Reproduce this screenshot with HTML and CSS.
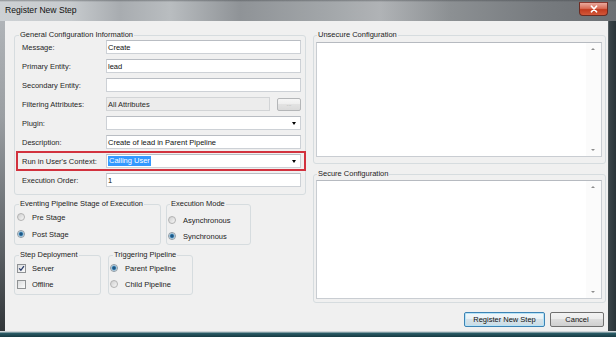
FILE: index.html
```html
<!DOCTYPE html>
<html>
<head>
<meta charset="utf-8">
<title>Register New Step</title>
<link rel="stylesheet" href="styles.css">
</head>
<body>
<div class="window">
  <div class="titlebar">
    <span class="title">Register New Step</span>
    <div class="close">
      <svg width="10" height="8" viewBox="0 0 10 8"><path d="M2.5 1.2 L7.5 6.8 M7.5 1.2 L2.5 6.8" stroke="#fff" stroke-width="1.7" stroke-linecap="round"/></svg>
    </div>
  </div>
  <div class="client">
    <div class="main">
      <div class="left">
        <fieldset class="grp general">
          <legend class="lg lg-general">General Configuration Information</legend>
          <div class="rows">
            <div class="frow"><span class="lbl">Message:</span><div class="tb">Create</div></div>
            <div class="frow"><span class="lbl">Primary Entity:</span><div class="tb">lead</div></div>
            <div class="frow"><span class="lbl">Secondary Entity:</span><div class="tb"></div></div>
            <div class="frow"><span class="lbl">Filtering Attributes:</span>
              <div class="split"><div class="tb dis">All Attributes</div><div class="dots">...</div></div>
            </div>
            <div class="frow"><span class="lbl">Plugin:</span><div class="tb combo"><span></span><i class="arr"></i></div></div>
            <div class="frow"><span class="lbl">Description:</span><div class="tb">Create of lead in Parent Pipeline</div></div>
            <div class="frow hl"><span class="lbl">Run in User's Context:</span><div class="tb combo"><span class="sel">Calling User</span><i class="arr"></i></div></div>
            <div class="frow"><span class="lbl">Execution Order:</span><div class="tb">1</div></div>
          </div>
        </fieldset>

        <div class="pair pair-a">
          <fieldset class="grp stage">
            <legend class="lg">Eventing Pipeline Stage of Execution</legend>
            <div class="opts">
              <div class="opt"><span class="radio"></span><span>Pre Stage</span></div>
              <div class="opt"><span class="radio on"></span><span>Post Stage</span></div>
            </div>
          </fieldset>
          <fieldset class="grp mode">
            <legend class="lg">Execution Mode</legend>
            <div class="opts">
              <div class="opt"><span class="radio"></span><span>Asynchronous</span></div>
              <div class="opt"><span class="radio on"></span><span>Synchronous</span></div>
            </div>
          </fieldset>
        </div>

        <div class="pair pair-b">
          <fieldset class="grp deploy">
            <legend class="lg">Step Deployment</legend>
            <div class="opts">
              <div class="opt"><span class="check"><svg width="7" height="7" viewBox="0 0 7 7"><path d="M1.2 3.4 L2.9 5.3 L5.9 1.2" fill="none" stroke="#2b3d6b" stroke-width="1.3"/></svg></span><span>Server</span></div>
              <div class="opt"><span class="check"></span><span>Offline</span></div>
            </div>
          </fieldset>
          <fieldset class="grp trig">
            <legend class="lg lg-trig">Triggering Pipeline</legend>
            <div class="opts">
              <div class="opt"><span class="radio on"></span><span>Parent Pipeline</span></div>
              <div class="opt"><span class="radio"></span><span>Child Pipeline</span></div>
            </div>
          </fieldset>
        </div>
      </div>

      <div class="right">
        <fieldset class="grp unsecure">
          <legend class="lg lg-right">Unsecure Configuration</legend>
          <div class="ta ta-top"><div class="sb"><i class="up"></i><i class="down"></i></div></div>
        </fieldset>
        <fieldset class="grp secure">
          <legend class="lg lg-right">Secure Configuration</legend>
          <div class="ta ta-bottom"><div class="sb"><i class="up"></i><i class="down"></i></div></div>
        </fieldset>
      </div>
    </div>

    <div class="buttons">
      <div class="btn primary">Register New Step</div>
      <div class="btn cancel">Cancel</div>
    </div>
  </div>
</div>
</body>
</html>
```

FILE: styles.css
```css
html, body {
  margin: 0;
  padding: 0;
}

body {
  width: 616px;
  height: 337px;
  overflow: hidden;
  font-family: "Liberation Sans", Arial, sans-serif;
  font-size: 7.5px;
  color: #1c1c1c;
  background: #2c3438;
}

.window {
  width: 616px;
  height: 337px;
  display: flex;
  flex-direction: column;
  background:
    linear-gradient(180deg, transparent 0, transparent 331px, #cfd5d8 331px, #cfd5d8 332px, #2b5e69 333px, #173a42 337px),
    linear-gradient(90deg, transparent 0, transparent 607px, #3a4448 609px, #2a3438 616px),
    linear-gradient(180deg, #b4b8bc 0, #9a9ea2 35%, #5a5f63 75%, #2e3336 100%);
}

/* ---------- title bar ---------- */
.titlebar {
  flex: none;
  height: 21px;
  display: flex;
  align-items: flex-start;
  padding-left: 5px;
  box-sizing: border-box;
  background:
    linear-gradient(180deg, rgba(60, 64, 68, 0.45) 0, rgba(60, 64, 68, 0) 2px),
    linear-gradient(90deg, #cdd1d4 0, #c7cbce 70px, #a8acb0 120px, #b9bdc0 170px, #8f9397 240px, #a3a7aa 330px, #b0b3b6 380px, #8c9093 450px, #777b7f 540px, #6c7074 616px);
}

.title {
  font-size: 8.6px;
  line-height: 21px;
  color: #101010;
}

.close {
  margin-left: auto;
  margin-right: 8px;
  margin-top: 2px;
  width: 29px;
  height: 14px;
  box-sizing: border-box;
  border: 1px solid #6b2b22;
  border-top-color: #8a3a30;
  border-radius: 0 0 4px 4px;
  background: linear-gradient(180deg, #e9a99d 0, #d86c56 45%, #c23b1f 55%, #d2583a 100%);
  display: flex;
  align-items: center;
  justify-content: center;
}

.close svg {
  display: block;
}

/* ---------- client area ---------- */
.client {
  flex: 1;
  margin: 0 8px 6px 5px;
  padding-top: 9px;
  background: #f0f0f0;
  display: flex;
  flex-direction: column;
  box-sizing: border-box;
}

.main {
  display: grid;
  grid-template-columns: 292px 293px;
  column-gap: 7px;
  padding-left: 9px;
  align-items: start;
}

.left {
  display: flex;
  flex-direction: column;
}

.right {
  display: flex;
  flex-direction: column;
}

/* ---------- group boxes ---------- */
.grp {
  margin: 0;
  min-width: 0;
  box-sizing: border-box;
  border: 1px solid #d6dcdf;
  border-radius: 3px;
  padding: 0;
}

.lg {
  padding: 0 1px;
  margin-left: 2px;
  line-height: 10px;
  font-size: 7.5px;
  color: #1c1c1c;
}

.lg-general {
  margin-left: 0;
}

.lg-trig {
  margin-left: 3px;
}

.lg-right {
  margin-left: 1px;
}

.general {
  padding: 0 2px 7px 4px;
  margin-bottom: 4px;
}

.rows {
  display: flex;
  flex-direction: column;
  gap: 5px;
}

.frow {
  display: grid;
  grid-template-columns: 84px 1fr;
  align-items: center;
  height: 14px;
  padding: 0 2px 0 3px;
}

.frow.hl {
  outline: 2px solid #d2323e;
  outline-offset: 1px;
}

.lbl {
  color: #262626;
  white-space: nowrap;
}

.tb {
  height: 14px;
  box-sizing: border-box;
  border: 1px solid #cdd1d6;
  border-top-color: #b9bdc3;
  background: #fff;
  padding: 0 1px;
  display: flex;
  align-items: center;
  color: #111;
  white-space: nowrap;
  overflow: hidden;
}

.tb.dis {
  flex: 1;
  background: #ececec;
  border-color: #d2d4d6;
  color: #2a2a2a;
}

.split {
  display: flex;
  gap: 7px;
  align-items: center;
}

.dots {
  width: 24px;
  height: 13px;
  box-sizing: border-box;
  border: 1px solid #b4b6b8;
  border-radius: 2px;
  background: linear-gradient(180deg, #f6f6f6 0, #ededed 50%, #e2e2e2 50%, #dadada 100%);
  color: #a8a8a8;
  font-size: 6px;
  line-height: 11px;
  text-align: center;
}

.combo .arr {
  margin-left: auto;
  margin-right: 3px;
  width: 0;
  height: 0;
  border-left: 2.5px solid transparent;
  border-right: 2.5px solid transparent;
  border-top: 3px solid #000;
}

.sel {
  background: #3399ff;
  color: #fff;
  padding: 0 1px;
  line-height: 10px;
}

/* ---------- option groups ---------- */
.pair {
  display: flex;
}

.pair-a {
  gap: 5px;
  margin-bottom: 5px;
}

.pair-b {
  gap: 7px;
}

.opts {
  display: flex;
  flex-direction: column;
}

.opt {
  display: flex;
  align-items: center;
  height: 14px;
  gap: 7px;
  white-space: nowrap;
}

.stage {
  width: 147px;
  padding: 1px 2px 3px 2px;
}

.stage .opts {
  gap: 3px;
}

.mode {
  width: 85px;
  padding: 4px 2px 0 1px;
}

.mode .opts {
  gap: 2px;
}

.deploy {
  width: 87px;
  padding: 1px 2px 3px 2px;
}

.deploy .opts,
.trig .opts {
  gap: 2px;
}

.deploy .opt {
  gap: 6px;
}

.trig {
  width: 85px;
  padding: 1px 2px 3px 1px;
}

.radio {
  flex: none;
  width: 8px;
  height: 8px;
  box-sizing: border-box;
  border-radius: 50%;
  border: 1px solid #b2b2b2;
  background: linear-gradient(135deg, #cfcfcf 0, #f7f7f7 100%);
}

.radio.on {
  border-color: #8d99a3;
  background: radial-gradient(circle at 50% 50%, #163f66 0, #2a6e9f 1.5px, #8fbfe0 2.4px, #e4e8ea 3px);
}

.check {
  flex: none;
  width: 9px;
  height: 9px;
  box-sizing: border-box;
  border: 1px solid #8f9294;
  background: linear-gradient(135deg, #dadcdd 0, #fbfbfb 100%);
  display: flex;
  align-items: center;
  justify-content: center;
}

.check svg {
  display: block;
}

/* ---------- text areas ---------- */
.unsecure {
  padding: 2px 3px 6px 2px;
}

.secure {
  margin-top: 5px;
  padding: 1px 3px 3px 2px;
}

.ta {
  box-sizing: border-box;
  border: 1px solid #c9cdd2;
  border-top-color: #b6bac0;
  background: #fff;
  display: flex;
  justify-content: flex-end;
}

.ta-top {
  height: 115px;
}

.ta-bottom {
  height: 119px;
}

.sb {
  width: 15px;
  background: #fbfbfb;
  display: flex;
  flex-direction: column;
  justify-content: space-between;
  align-items: center;
  padding: 5px 2px 5px 0;
  box-sizing: border-box;
}

.sb .up {
  width: 0;
  height: 0;
  border-left: 2px solid transparent;
  border-right: 2px solid transparent;
  border-bottom: 2px solid #8d8d8d;
}

.sb .down {
  width: 0;
  height: 0;
  border-left: 2px solid transparent;
  border-right: 2px solid transparent;
  border-top: 2px solid #8d8d8d;
}

/* ---------- buttons ---------- */
.buttons {
  margin-top: auto;
  display: flex;
  justify-content: flex-end;
  gap: 5px;
  padding: 0 4px 4px 0;
}

.btn {
  height: 15px;
  box-sizing: border-box;
  border: 1px solid #707070;
  border-radius: 2px;
  background: linear-gradient(180deg, #f3f3f3 0, #ebebeb 50%, #dddddd 50%, #cfcfcf 100%);
  display: flex;
  align-items: center;
  justify-content: center;
  color: #111;
  white-space: nowrap;
}

.btn.primary {
  width: 81px;
  border-color: #3d83b4;
  box-shadow: inset 0 0 0 1px #b6e3f7;
  background: linear-gradient(180deg, #f2f8fb 0, #e6eff4 50%, #d6e3ea 50%, #cbdbe4 100%);
}

.btn.cancel {
  width: 54px;
}
```
